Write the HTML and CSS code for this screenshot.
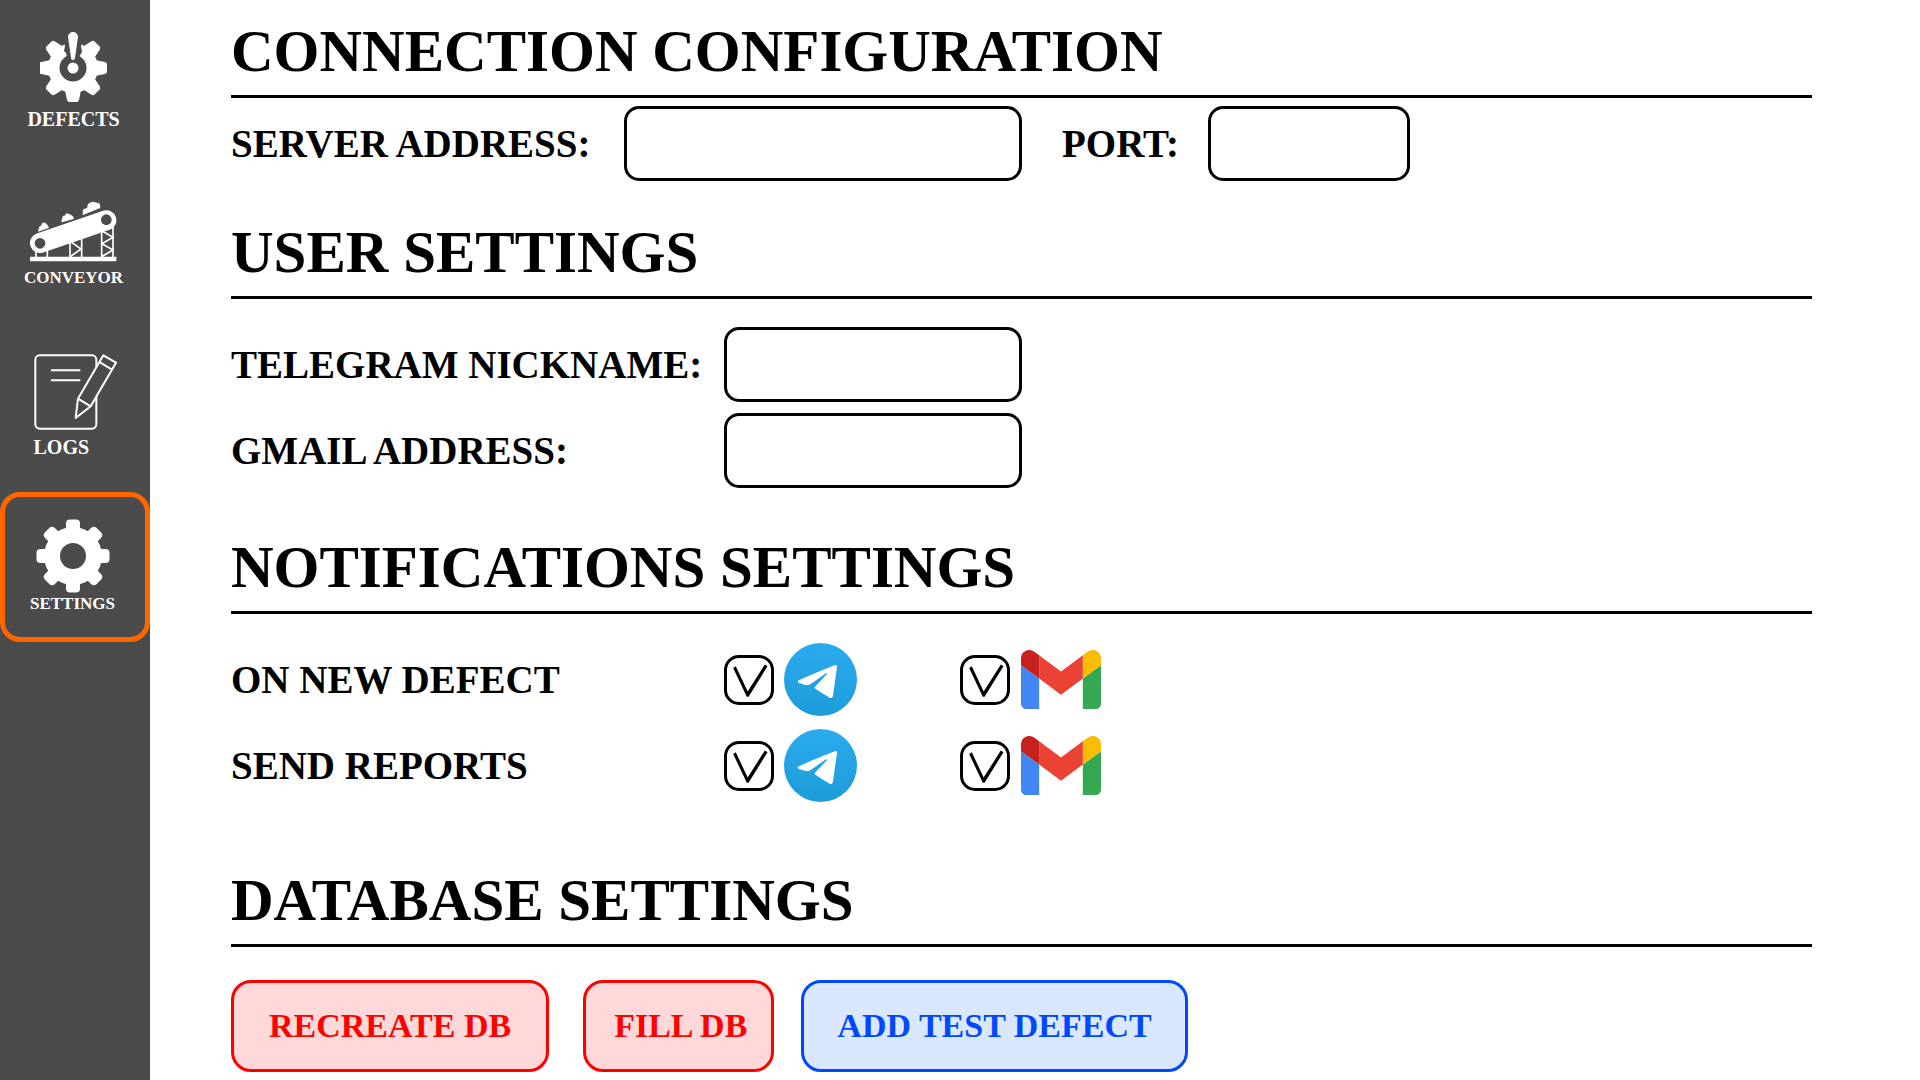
FILE: index.html
```html
<!DOCTYPE html>
<html lang="en">
<head>
<meta charset="utf-8">
<meta name="viewport" content="width=device-width, initial-scale=1">
<title>Settings</title>
<link rel="stylesheet" href="styles.css">
</head>
<body>
<svg class="symbols" aria-hidden="true">
  <defs>
    <linearGradient id="sky" x1="0" y1="0" x2="0" y2="1">
      <stop offset="0" stop-color="#2aabee"/>
      <stop offset="1" stop-color="#1d9cd9"/>
    </linearGradient>
  </defs>
  <symbol id="telegram" viewBox="0 0 219 219">
    <circle cx="109.500" cy="109.500" r="109.500" fill="url(#sky)"/>
    <path fill="#fff" d="M42 114C44 110 150 67 154 66Q160 65 159 72L147 158Q145 167 137 164Q112 150 92 136Q91 132 95 129L129 93Q130 90 126 91L80 123Q74 127 62 125L45 120Q39 117 42 114Z"/>
  </symbol>
  <symbol id="gmail" viewBox="52 42 88 66" preserveAspectRatio="none">
    <path fill="#4285f4" d="M58 108h14V74L52 59v43c0 3.320 2.690 6 6 6"/>
    <path fill="#34a853" d="M120 108h14c3.320 0 6-2.690 6-6V59l-20 15"/>
    <path fill="#fbbc04" d="M120 48v26l20-15v-8c0-7.420-8.470-11.650-14.400-7.200"/>
    <path fill="#ea4335" d="M72 74V48l24 18 24-18v26L96 92"/>
    <path fill="#c5221f" d="M52 51v8l20 15V48l-5.600-4.200c-5.940-4.450-14.400-.220-14.400 7.200"/>
  </symbol>
</svg>
<div class="app">
  <nav class="sidebar">
    <a class="nav-item nav-defects" href="#defects">
      <svg width="68" height="70" viewBox="-33 -36 68 70" aria-hidden="true">
        <g fill="#fff">
          <circle r="25"/>
          <path id="tooth" d="M-8-22L-6-32Q-5-34-4-34H4Q5-34 6-32L8-22Z" transform="rotate(45)"/>
          <path d="M-8-22L-6-32Q-5-34-4-34H4Q5-34 6-32L8-22Z" transform="rotate(315)"/>
          <use href="#tooth" transform="rotate(45)"/>
          <use href="#tooth" transform="rotate(90)"/>
          <use href="#tooth" transform="rotate(135)"/>
          <use href="#tooth" transform="rotate(180)"/>
          <use href="#tooth" transform="rotate(225)"/>
        </g>
        <g fill="#4b4b4b">
          <circle r="13.500"/>
          <path d="M-11-36H11L8-22L9-16L6-11H-6L-7-15L-9-17L-8-22Z"/>
        </g>
        <circle r="5.500" fill="#fff"/>
        <path fill="#fff" d="M-5-31A5 5 0 0 1 5-31L2-10A2 2 0 0 1-2-10Z"/>
      </svg>
      <span>DEFECTS</span>
    </a>
    <a class="nav-item nav-conveyor" href="#conveyor">
      <svg width="88" height="61" viewBox="87 64 264 183" aria-hidden="true">
        <path stroke="#fff" stroke-width="60" stroke-linecap="round" d="M117 190L316 122"/>
        <path fill="#fff" d="M87 231H346V245H87Z"/>
        <path fill="none" stroke="#fff" stroke-width="5" d="M105 210V232M139 205V232M207 180V232M242 168V232M302 148V232M336 135V232M209 186L240 208L209 230M302 153L336 173L303 192L336 211L304 230"/>
        <path fill="#fff" stroke="#fff" stroke-width="2" stroke-linejoin="round" d="M112 155L116 141L121 138L125 130L131 130L138 135L143 144ZM182 127L186 110L192 109L196 102L204 104L215 110L218 117ZM246 105L247 90L259 86L262 73L274 67L295 72L297 84Z"/>
        <circle cx="117" cy="191" r="16" fill="#4b4b4b"/>
        <circle cx="316" cy="120" r="16" fill="#4b4b4b"/>
      </svg>
      <span>CONVEYOR</span>
    </a>
    <a class="nav-item nav-logs" href="#logs">
      <span class="nav-stack">
        <svg width="83" height="76" viewBox="101 73 249 228" aria-hidden="true">
          <g fill="none" stroke="#fff" stroke-width="6" stroke-linejoin="round">
            <rect x="105" y="77" width="183" height="220" rx="13"/>
            <path d="M152 122H240M152 152H240"/>
            <path fill="#4b4b4b" d="M309 77L347 99L271 230L226 265L233 207Z"/>
            <path d="M299 98L335 120M233 207L271 230"/>
          </g>
        </svg>
        <span>LOGS</span>
      </span>
    </a>
    <a class="nav-item nav-settings" href="#settings" aria-current="page">
      <svg width="74" height="74" viewBox="-37 -37 74 74" aria-hidden="true">
        <g fill="#fff">
          <circle r="29"/>
          <rect id="cog" x="-7" y="-36.500" width="14" height="73" rx="4"/>
          <use href="#cog" transform="rotate(45)"/>
          <use href="#cog" transform="rotate(90)"/>
          <use href="#cog" transform="rotate(135)"/>
        </g>
        <circle r="13" fill="#4b4b4b"/>
      </svg>
      <span>SETTINGS</span>
    </a>
  </nav>

  <main class="content">
    <section class="section connection">
      <h1>CONNECTION CONFIGURATION</h1>
      <div class="address-row">
        <div class="field">
          <label class="server-label" for="server">SERVER ADDRESS:</label>
          <input class="text-box server-box" id="server" type="text">
        </div>
        <div class="field">
          <label for="port">PORT:</label>
          <input class="text-box port-box" id="port" type="text">
        </div>
      </div>
    </section>

    <section class="section user">
      <h1>USER SETTINGS</h1>
      <div class="rows">
        <div class="row">
          <label for="telegram-name">TELEGRAM NICKNAME:</label>
          <input class="text-box" id="telegram-name" type="text">
        </div>
        <div class="row">
          <label for="gmail-address">GMAIL ADDRESS:</label>
          <input class="text-box" id="gmail-address" type="text">
        </div>
      </div>
    </section>

    <section class="section notifications">
      <h1>NOTIFICATIONS SETTINGS</h1>
      <div class="rows">
        <div class="row">
          <span>ON NEW DEFECT</span>
          <div class="channels">
            <label class="channel"><input type="checkbox" aria-label="Telegram on new defect" checked><svg width="73" height="73" aria-hidden="true"><use href="#telegram"/></svg></label>
            <label class="channel gmail"><input type="checkbox" aria-label="Gmail on new defect" checked><svg width="80" height="59" aria-hidden="true"><use href="#gmail"/></svg></label>
          </div>
        </div>
        <div class="row">
          <span>SEND REPORTS</span>
          <div class="channels">
            <label class="channel"><input type="checkbox" aria-label="Telegram reports" checked><svg width="73" height="73" aria-hidden="true"><use href="#telegram"/></svg></label>
            <label class="channel gmail"><input type="checkbox" aria-label="Gmail reports" checked><svg width="80" height="59" aria-hidden="true"><use href="#gmail"/></svg></label>
          </div>
        </div>
      </div>
    </section>

    <section class="section database">
      <h1>DATABASE SETTINGS</h1>
      <div class="buttons">
        <button class="button danger recreate" type="button">RECREATE DB</button>
        <button class="button danger fill" type="button">FILL DB</button>
        <button class="button primary" type="button">ADD TEST DEFECT</button>
      </div>
    </section>
  </main>
</div>
</body>
</html>
```
FILE: styles.css
```css
* {
  box-sizing: border-box;
}

body {
  margin: 0;
  background: #fff;
  color: #000;
  font-family: "Liberation Serif", "Times New Roman", serif;
  font-weight: 700;
}

.symbols {
  position: absolute;
  width: 0;
  height: 0;
}

.app {
  display: grid;
  grid-template-columns: 150px 1fr;
  min-height: 100vh;
}

/* Sidebar */

.sidebar {
  background: #4b4b4b;
}

.nav-item {
  display: flex;
  flex-direction: column;
  align-items: center;
  height: 164px;
  color: #fff;
  font-size: 20px;
  line-height: 20px;
  text-decoration: none;
}

.nav-item svg {
  display: block;
}

.nav-defects {
  gap: 7px;
  padding: 32px 3px 0 0;
}

.nav-conveyor {
  gap: 6px;
  padding: 37px 3px 0 0;
  font-size: 17px;
}

.nav-logs {
  padding-top: 26px;
}

.nav-stack {
  display: flex;
  flex-direction: column;
  gap: 7px;
}

.nav-settings {
  gap: 1px;
  height: 150px;
  padding: 22px 5px 0 0;
  border: 5px solid #ff6600;
  border-radius: 20px;
  font-size: 17px;
}

/* Sections */

.content {
  padding: 18px 108px 8px 81px;
}

h1 {
  margin: 0;
  padding-bottom: 11px;
  border-bottom: 3px solid #000;
  font-size: 59px;
  line-height: 66px;
}

.section {
  display: flex;
  flex-direction: column;
  gap: 28px;
  font-size: 39px;
  line-height: 44px;
}

.connection {
  gap: 8px;
}

.user {
  margin-top: 38px;
}

.notifications {
  margin-top: 46px;
}

.database {
  gap: 33px;
  margin-top: 64px;
}

.address-row {
  display: flex;
  flex-wrap: wrap;
  gap: 40px;
}

.field {
  display: flex;
  align-items: center;
  gap: 29px;
}

.server-label {
  min-width: 364px;
}

.rows {
  display: grid;
  gap: 11px;
}

.row {
  display: grid;
  grid-template-columns: 493px auto;
  justify-content: start;
  align-items: center;
  min-height: 75px;
}

.text-box {
  width: 298px;
  height: 75px;
  padding: 0 16px;
  border: 3px solid #000;
  border-radius: 15px;
  background: #fff;
  font: inherit;
}

.server-box {
  width: 398px;
}

.port-box {
  width: 202px;
}

.channels {
  display: grid;
  grid-template-columns: 236px auto;
}

.channel {
  display: flex;
  align-items: center;
  gap: 10px;
}

.gmail {
  gap: 11px;
}

input[type="checkbox"] {
  appearance: none;
  width: 50px;
  height: 50px;
  margin: 0;
  border: 3px solid #000;
  border-radius: 15px;
  background: #fff;
}

input[type="checkbox"]:checked::before {
  content: "";
  display: block;
  height: 44px;
  background: #000;
  clip-path: polygon(14% 24%, 20% 20%, 47% 77%, 86% 16%, 92% 20%, 49% 89%, 45% 89%);
}

/* Buttons */

.buttons {
  display: flex;
  flex-wrap: wrap;
}

.button {
  height: 92px;
  padding: 0 33px;
  border: 3px solid;
  border-radius: 20px;
  font: inherit;
  font-size: 34px;
}

.danger {
  border-color: #ff0000;
  background: #ffd9d9;
  color: #ff0000;
}

.primary {
  border-color: #0048ff;
  background: #d9e8ff;
  color: #0048ff;
}

.recreate {
  margin-right: 34px;
  padding: 0 35px;
}

.fill {
  margin-right: 27px;
  padding: 0 24px 0 28px;
}
```
